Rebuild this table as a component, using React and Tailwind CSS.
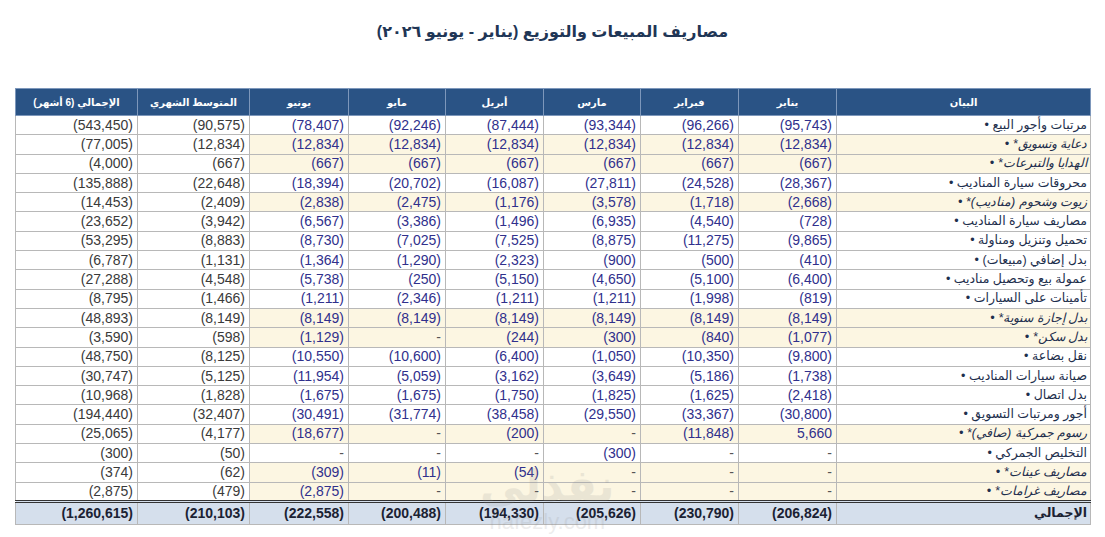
import React from 'react';

const months = ['يناير', 'فبراير', 'مارس', 'أبريل', 'مايو', 'يونيو'];

// label, starred, [jan..jun], avg, total
const rows = [
  ['مرتبات وأجور البيع', false, ['(95,743)', '(96,266)', '(93,344)', '(87,444)', '(92,246)', '(78,407)'], '(90,575)', '(543,450)'],
  ['دعاية وتسويق', true, ['(12,834)', '(12,834)', '(12,834)', '(12,834)', '(12,834)', '(12,834)'], '(12,834)', '(77,005)'],
  ['الهدايا والتبرعات', true, ['(667)', '(667)', '(667)', '(667)', '(667)', '(667)'], '(667)', '(4,000)'],
  ['محروقات سيارة المناديب', false, ['(28,367)', '(24,528)', '(27,811)', '(16,087)', '(20,702)', '(18,394)'], '(22,648)', '(135,888)'],
  ['زيوت وشحوم (مناديب)', true, ['(2,668)', '(1,718)', '(3,578)', '(1,176)', '(2,475)', '(2,838)'], '(2,409)', '(14,453)'],
  ['مصاريف سيارة المناديب', false, ['(728)', '(4,540)', '(6,935)', '(1,496)', '(3,386)', '(6,567)'], '(3,942)', '(23,652)'],
  ['تحميل وتنزيل ومناولة', false, ['(9,865)', '(11,275)', '(8,875)', '(7,525)', '(7,025)', '(8,730)'], '(8,883)', '(53,295)'],
  ['بدل إضافي (مبيعات)', false, ['(410)', '(500)', '(900)', '(2,323)', '(1,290)', '(1,364)'], '(1,131)', '(6,787)'],
  ['عمولة بيع وتحصيل مناديب', false, ['(6,400)', '(5,100)', '(4,650)', '(5,150)', '(250)', '(5,738)'], '(4,548)', '(27,288)'],
  ['تأمينات على السيارات', false, ['(819)', '(1,998)', '(1,211)', '(1,211)', '(2,346)', '(1,211)'], '(1,466)', '(8,795)'],
  ['بدل إجازة سنوية', true, ['(8,149)', '(8,149)', '(8,149)', '(8,149)', '(8,149)', '(8,149)'], '(8,149)', '(48,893)'],
  ['بدل سكن', true, ['(1,077)', '(840)', '(300)', '(244)', '-', '(1,129)'], '(598)', '(3,590)'],
  ['نقل بضاعة', false, ['(9,800)', '(10,350)', '(1,050)', '(6,400)', '(10,600)', '(10,550)'], '(8,125)', '(48,750)'],
  ['صيانة سيارات المناديب', false, ['(1,738)', '(5,186)', '(3,649)', '(3,162)', '(5,059)', '(11,954)'], '(5,125)', '(30,747)'],
  ['بدل اتصال', false, ['(2,418)', '(1,625)', '(1,825)', '(1,750)', '(1,675)', '(1,675)'], '(1,828)', '(10,968)'],
  ['أجور ومرتبات التسويق', false, ['(30,800)', '(33,367)', '(29,550)', '(38,458)', '(31,774)', '(30,491)'], '(32,407)', '(194,440)'],
  ['رسوم جمركية (صافي)', true, ['5,660', '(11,848)', '-', '(200)', '-', '(18,677)'], '(4,177)', '(25,065)'],
  ['التخليص الجمركي', false, ['-', '-', '(300)', '-', '-', '-'], '(50)', '(300)'],
  ['مصاريف عينات', true, ['-', '-', '-', '(54)', '(11)', '(309)'], '(62)', '(374)'],
  ['مصاريف غرامات', true, ['-', '-', '-', '-', '-', '(2,875)'], '(479)', '(2,875)'],
];

const totals = ['(206,824)', '(230,790)', '(205,626)', '(194,330)', '(200,488)', '(222,558)'];

const font = { fontFamily: '"Liberation Sans", "DejaVu Sans", Arial, sans-serif' };

export default function App() {
  return (
    <div className="relative w-[1105px] h-[537px] bg-white overflow-hidden" style={font}>
      <h1 dir="rtl" className="pt-[20px] text-center text-[16px] leading-[24px] font-bold text-[#1f3656]">
        مصاريف المبيعات والتوزيع (يناير - يونيو ٢٠٢٦)
      </h1>

      <div className="mt-[44px] pl-[15px]">
        <table dir="rtl" className="table-fixed border-collapse w-[1075px] text-[14px]">
          <colgroup>
            <col className="w-[254px]" />
            <col className="w-[98px]" />
            <col className="w-[98px]" />
            <col className="w-[97px]" />
            <col className="w-[98px]" />
            <col className="w-[97px]" />
            <col className="w-[99px]" />
            <col className="w-[112px]" />
            <col className="w-[122px]" />
          </colgroup>
          <thead>
            <tr className="h-[27px] bg-[#2a5385] text-white text-[10px] font-bold">
              <th className="border border-[#7d97bb] font-bold">البيان</th>
              {months.map((m) => (
                <th key={m} className="border border-[#7d97bb] font-bold">{m}</th>
              ))}
              <th className="border border-[#7d97bb] font-bold">المتوسط الشهري</th>
              <th className="border border-[#7d97bb] font-bold">الإجمالي (6 أشهر)</th>
            </tr>
          </thead>
          <tbody>
            {rows.map(([label, star, vals, avg, total]) => (
              <tr key={label} className="h-[19.3px] leading-[17px]">
                <td
                  className={`border border-[#b8b8b8] pr-[3px] text-right text-[12.5px] text-[#1e2f4d] whitespace-nowrap ${
                    star ? 'italic bg-[#fcf6e2]' : ''
                  }`}
                >
                  {label}
                  {star ? '*' : ''} •
                </td>
                {vals.map((v, i) => (
                  <td
                    key={i}
                    dir="ltr"
                    className={`border border-[#b8b8b8] pr-[4px] text-right ${
                      v === '-' ? 'text-[#555]' : 'text-[#30308c]'
                    } ${star ? 'bg-[#fcf6e2]' : ''}`}
                  >
                    {v}
                  </td>
                ))}
                <td dir="ltr" className="border border-[#b8b8b8] pr-[4px] text-right text-[#3a3a3a]">
                  {avg}
                </td>
                <td dir="ltr" className="border border-[#b8b8b8] pr-[4px] text-right text-[#3a3a3a]">
                  {total}
                </td>
              </tr>
            ))}
            <tr className="h-[20px] bg-[#d5dfec] font-bold text-[#1b2233]">
              <td className="border border-[#b8b8b8] border-t-[3px] border-t-[#333] border-double pr-[3px] text-right text-[12.5px]">
                الإجمالي
              </td>
              {totals.map((v, i) => (
                <td
                  key={i}
                  dir="ltr"
                  className="border border-[#b8b8b8] border-t-[3px] border-t-[#333] border-double pr-[4px] text-right"
                >
                  {v}
                </td>
              ))}
              <td dir="ltr" className="border border-[#b8b8b8] border-t-[3px] border-t-[#333] border-double pr-[4px] text-right">
                (210,103)
              </td>
              <td dir="ltr" className="border border-[#b8b8b8] border-t-[3px] border-t-[#333] border-double pr-[4px] text-right">
                (1,260,615)
              </td>
            </tr>
          </tbody>
        </table>
      </div>

      {/* faint watermark over the lower middle */}
      <div className="pointer-events-none absolute left-[480px] top-[462px] flex flex-col items-center opacity-15">
        <span dir="rtl" className="text-[44px] leading-[48px] font-bold text-[#8a8a8a]">نفذلي</span>
        <span className="text-[22px] leading-[24px] text-[#8a8a8a]">nafezly.com</span>
      </div>
    </div>
  );
}
